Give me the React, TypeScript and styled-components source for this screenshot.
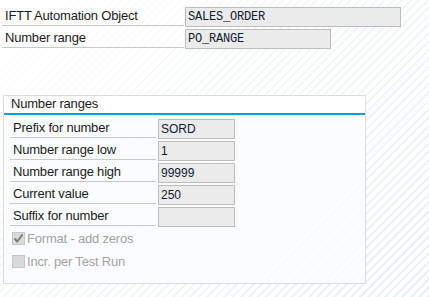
import styled, { createGlobalStyle } from "styled-components";

const GlobalStyle = createGlobalStyle`
	html, body {
		margin: 0;
		padding: 0;
	}
	body {
		width: 429px;
		height: 297px;
		overflow: hidden;
		font-family: "Liberation Sans", Tahoma, sans-serif;
		font-size: 13px;
		letter-spacing: -0.2px;
		color: #1b1b1b;
		background-color: #ffffff;
		background-image:
			linear-gradient(135deg, rgba(255, 255, 255, 1) 0%, rgba(255, 255, 255, 0.6) 40%, rgba(255, 255, 255, 0) 100%),
			repeating-linear-gradient(-45deg, #e6eff6 0px, #e6eff6 2px, #ffffff 2px, #ffffff 6px);
	}
`;

const Page = styled.div`
	display: flex;
	flex-direction: column;
	padding: 5px 0 0 2px;
`;

const Row = styled.div`
	display: flex;
	align-items: flex-start;
	height: 22px;
`;

const Label = styled.div<{ $width: number }>`
	width: ${(p) => p.$width}px;
	height: 21px;
	box-sizing: border-box;
	border-bottom: 1px solid #c9c9c9;
	padding: 4px 0 0 3px;
	line-height: 14px;
	white-space: nowrap;
`;

const Field = styled.div<{ $width: number; $mono?: boolean }>`
	width: ${(p) => p.$width}px;
	height: 20px;
	margin: 2px 0 0 ${(p) => (p.$mono ? 1 : 2)}px;
	box-sizing: border-box;
	border: 1px solid #bcbcbc;
	background: #ebebeb;
	padding: 0 0 0 2px;
	line-height: 19px;
	font-family: ${(p) =>
		p.$mono ? `"Liberation Mono", "Courier New", monospace` : `"Liberation Sans", Tahoma, sans-serif`};
	font-size: 12px;
	letter-spacing: ${(p) => (p.$mono ? "-0.2px" : "0")};
	color: #111a33;
	white-space: nowrap;
`;

const GroupBox = styled.div`
	width: 363px;
	height: 189px;
	margin: 46px 0 0 1px;
	box-sizing: border-box;
	border: 1px solid #dcdcdc;
	background: rgba(250, 252, 254, 0.85);
	padding: 0 1px 0 2px;
	display: flex;
	flex-direction: column;
`;

const GroupHeader = styled.div`
	height: 17px;
	border-bottom: 2px solid #0a9ee0;
	background: #ffffff;
	margin: 0 -1px 0 -2px;
	padding: 0 1px 0 7px;
	line-height: 16px;
`;

const GroupBody = styled.div`
	display: flex;
	flex-direction: column;
	padding: 2px 0 0 4px;
`;

const CheckRow = styled.div`
	display: flex;
	align-items: center;
	height: 23px;
	padding-left: 2px;
	gap: 2px;
	color: #a3a3a3;
`;

const Box = styled.span`
	width: 13px;
	height: 13px;
	box-sizing: border-box;
	border: 1px solid #c6c6c6;
	background: #dadada;
	display: flex;
	align-items: center;
	justify-content: center;
`;

const Check = () => (
	<svg width="11" height="11" viewBox="0 0 11 11">
		<path d="M1.5 5.5 L4.2 8.5 L9.5 1.5" fill="none" stroke="#7d7d7d" strokeWidth="2" />
	</svg>
);

const groupRows = [
	{ label: "Prefix for number", value: "SORD" },
	{ label: "Number range low", value: "1" },
	{ label: "Number range high", value: "99999" },
	{ label: "Current value", value: "250" },
	{ label: "Suffix for number", value: "" },
];

export default function App() {
	return (
		<>
			<GlobalStyle />
			<Page>
				<Row>
					<Label $width={182}>IFTT Automation Object</Label>
					<Field $width={216} $mono>
						SALES_ORDER
					</Field>
				</Row>
				<Row>
					<Label $width={182}>Number range</Label>
					<Field $width={146} $mono>
						PO_RANGE
					</Field>
				</Row>
				<GroupBox>
					<GroupHeader>Number ranges</GroupHeader>
					<GroupBody>
						{groupRows.map((r) => (
							<Row key={r.label}>
								<Label $width={146}>{r.label}</Label>
								<Field $width={77}>{r.value}</Field>
							</Row>
						))}
						<CheckRow>
							<Box>
								<Check />
							</Box>
							Format - add zeros
						</CheckRow>
						<CheckRow>
							<Box />
							Incr. per Test Run
						</CheckRow>
					</GroupBody>
				</GroupBox>
			</Page>
		</>
	);
}
